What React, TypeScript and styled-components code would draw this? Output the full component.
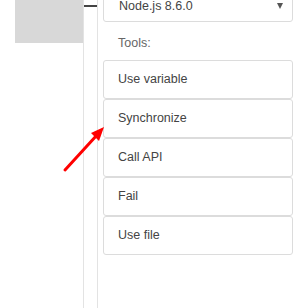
import styled, { createGlobalStyle } from 'styled-components';

const GlobalStyle = createGlobalStyle`
  html, body {
    margin: 0;
    padding: 0;
    background: #fff;
    overflow: hidden;
  }
  body {
    font-family: 'Liberation Sans', Arial, sans-serif;
  }
`;

const TOOLS = ['Use variable', 'Synchronize', 'Call API', 'Fail', 'Use file'];

const App = () => {
  return (
    <>
      <GlobalStyle />
      <StyledPage>
        <StyledSidebar>
          <StyledThumb />
        </StyledSidebar>
        <StyledConnector>
          <StyledTick />
        </StyledConnector>
        <StyledPanel>
          <StyledSelect>
            <span>Node.js 8.6.0</span>
            <StyledCaret />
          </StyledSelect>
          <StyledLabel>Tools:</StyledLabel>
          <StyledToolList>
            {TOOLS.map((name) => (
              <StyledTool key={name}>{name}</StyledTool>
            ))}
          </StyledToolList>
        </StyledPanel>
        <StyledPointer width="293" height="308" viewBox="0 0 293 308">
          <line x1="65" y1="170" x2="97" y2="135" stroke="#ff0000" strokeWidth="3" strokeLinecap="round" />
          <polygon points="104,127 91,133 99,141" fill="#ff0000" />
        </StyledPointer>
      </StyledPage>
    </>
  );
};

const StyledPage = styled.div`
  position: relative;
  display: flex;
  width: 293px;
  height: 308px;
`;

const StyledSidebar = styled.div`
  box-sizing: border-box;
  width: 84px;
  padding-left: 15px;
  border-right: 1px solid #e3e3e3;
`;

const StyledThumb = styled.div`
  width: 68px;
  height: 43px;
  background: #d8d8d8;
`;

const StyledConnector = styled.div`
  box-sizing: border-box;
  width: 14px;
  border-right: 1px solid #e3e3e3;
`;

const StyledTick = styled.div`
  margin-top: 5px;
  height: 2px;
  background: #444;
`;

const StyledPanel = styled.div`
  flex: 1;
  padding-left: 5px;
  display: flex;
  flex-direction: column;
`;

const StyledSelect = styled.div`
  box-sizing: border-box;
  position: relative;
  display: flex;
  align-items: center;
  justify-content: space-between;
  margin-top: -9px;
  height: 31px;
  padding: 0 9px 1px 15px;
  border: 1px solid #dcdcdc;
  border-radius: 3px;
  font-size: 12.5px;
  color: #444;
`;

const StyledCaret = styled.span`
  width: 0;
  height: 0;
  border-left: 3.5px solid transparent;
  border-right: 3.5px solid transparent;
  border-top: 6px solid #555;
`;

const StyledLabel = styled.div`
  height: 16px;
  margin: 13px 0 9px 15px;
  font-size: 12.5px;
  line-height: 16px;
  color: #666;
`;

const StyledToolList = styled.div`
  display: flex;
  flex-direction: column;
`;

const StyledTool = styled.div`
  box-sizing: border-box;
  height: 39px;
  display: flex;
  align-items: center;
  padding: 0 0 2px 14px;
  border: 1px solid #dcdcdc;
  border-radius: 3px;
  font-size: 12.5px;
  color: #444;
`;

const StyledPointer = styled.svg`
  position: absolute;
  left: 0;
  top: 0;
  pointer-events: none;
`;

export default App;
